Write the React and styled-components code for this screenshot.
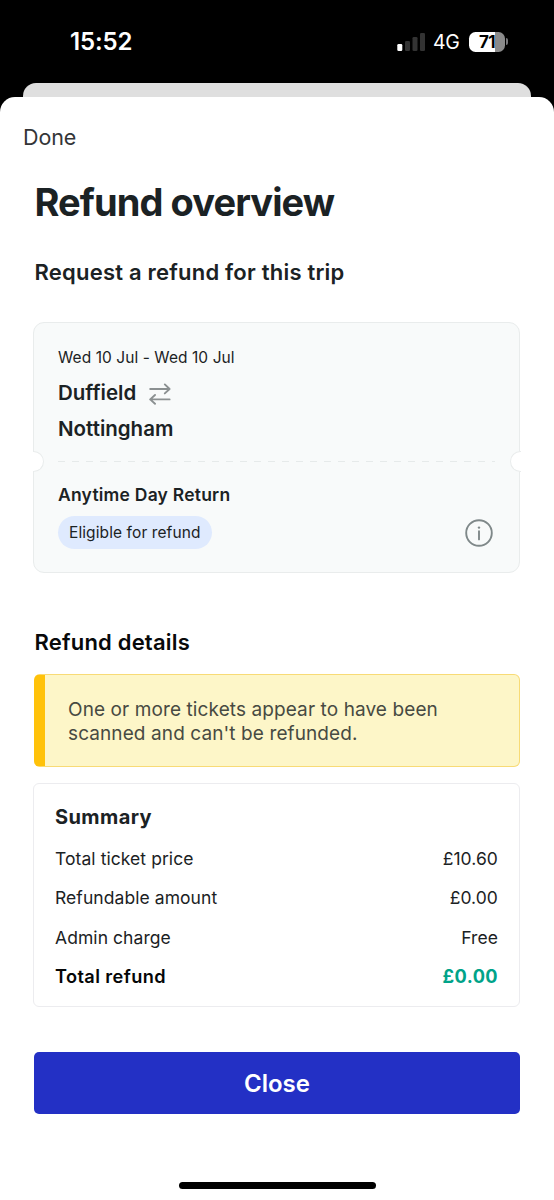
import React from 'react';
import styled, { createGlobalStyle } from 'styled-components';

const GlobalStyle = createGlobalStyle`
  * {
    box-sizing: border-box;
  }

  body {
    margin: 0;
    background: #000;
    color: #1b2224;
    font-family: Inter, 'Liberation Sans', sans-serif;
  }

  h1, h2, h3, p, dl, dt, dd {
    margin: 0;
  }
`;

const Screen = styled.div`
  width: 554px;
  height: 1200px;
  display: flex;
  flex-direction: column;
  overflow: hidden;
  background: #000;
`;

const StatusBar = styled.div`
  height: 83px;
  padding: 0 46px 0 70px;
  display: flex;
  justify-content: space-between;
  color: #fff;
  line-height: 83px;
`;

const Time = styled.span`
  font-size: 24px;
  font-weight: 600;
  letter-spacing: -0.1px;
`;

const StatusIcons = styled.div`
  display: flex;
  align-items: center;
  height: 83px;
`;

const Network = styled.span`
  margin: 0 8px 0 8px;
  padding-top: 1px;
  width: 28px;
  font-size: 19.5px;
  white-space: nowrap;
  letter-spacing: -0.3px;
`;

const Battery = styled.div`
  width: 36px;
  height: 20px;
  border-radius: 6.5px;
  background: linear-gradient(to right, #fff 71%, #8a8a8a 71%);
  color: #000;
  font-size: 17px;
  font-weight: 700;
  line-height: 20px;
  text-align: center;
  letter-spacing: -0.6px;
`;

const BatteryCap = styled.div`
  width: 2px;
  height: 7px;
  margin-left: 1px;
  border-radius: 0 2px 2px 0;
  background: #77777a;
`;

const BackSheet = styled.div`
  flex: none;
  height: 14px;
  margin: 0 23px;
  border-radius: 13px 13px 0 0;
  background: #dfdfdf;
`;

const Sheet = styled.main`
  flex: 1;
  display: flex;
  flex-direction: column;
  border-radius: 15px 15px 0 0;
  background: #fff;
`;

const DoneButton = styled.button`
  align-self: flex-start;
  height: 40px;
  margin: 20px 0 1px 23px;
  padding: 0;
  border: none;
  background: none;
  color: #333537;
  font: 400 21.5px/40px Inter, sans-serif;
  letter-spacing: -0.1px;
  cursor: pointer;
`;

const Content = styled.div`
  flex: 1;
  display: flex;
  flex-direction: column;
  padding: 20px 34px 0 33px;
`;

const Title = styled.h1`
  height: 48px;
  padding-left: 1.5px;
  font-size: 38px;
  font-weight: 700;
  line-height: 48px;
  letter-spacing: -0.92px;
`;

const Subtitle = styled.h2`
  height: 30px;
  margin-top: 31px;
  padding-left: 1.5px;
  font-size: 22px;
  font-weight: 600;
  line-height: 30px;
  letter-spacing: 0.22px;
`;

const Ticket = styled.section`
  flex: none;
  height: 251px;
  margin-top: 35px;
  border: 1.5px solid #e9ecec;
  border-radius: 11px;
  background: #f8fafa;
`;

const Journey = styled.div`
  height: 128px;
  padding: 20px 24px 0;
`;

const Dates = styled.p`
  height: 29px;
  font-size: 15.5px;
  line-height: 29px;
  letter-spacing: 0.07px;
`;

const Station = styled.div`
  display: flex;
  align-items: center;
  gap: 12.5px;
  height: 36.5px;
  padding-top: 4px;
  font-size: 20.5px;
  font-weight: 600;

  svg {
    margin-top: 3px;
  }
`;

const Perforation = styled.div`
  display: flex;
  align-items: center;
  justify-content: space-between;
  height: 21px;
  margin: 0 -1.5px;
`;

const Notch = styled.span`
  width: 11px;
  height: 21px;
  border: 1.5px solid #e9ecec;
  background: #fff;
  ${({ $side }) =>
    $side === 'left'
      ? 'border-left: none; border-radius: 0 10.5px 10.5px 0;'
      : 'border-right: none; border-radius: 10.5px 0 0 10.5px;'}
`;

const Dashes = styled.span`
  flex: 1;
  height: 1px;
  margin: 0 15px 0 14px;
  background: repeating-linear-gradient(to right, #e6eaea 0 7px, transparent 7px 14px);
`;

const Fare = styled.div`
  padding: 9px 26px 0 24px;
`;

const FareName = styled.h3`
  height: 28px;
  font-size: 17.5px;
  font-weight: 600;
  line-height: 28px;
  letter-spacing: 0.22px;
`;

const FareStatus = styled.div`
  display: flex;
  align-items: center;
  justify-content: space-between;
  margin-top: 7px;
`;

const Pill = styled.span`
  height: 33px;
  padding: 0 11px;
  border-radius: 17px;
  background: #dfeafe;
  font-size: 15.5px;
  line-height: 33px;
  letter-spacing: 0.1px;
`;

const SectionTitle = styled.h2`
  height: 30px;
  margin-top: 54px;
  padding-left: 1.5px;
  color: #08090a;
  font-size: 22px;
  font-weight: 600;
  line-height: 30px;
  letter-spacing: 0.2px;
`;

const Alert = styled.div`
  flex: none;
  display: flex;
  height: 93px;
  margin: 17px 0 0 1px;
  overflow: hidden;
  border: 1.5px solid #f8db76;
  border-left: 11px solid #ffc20a;
  border-radius: 6px;
  background: #fdf6c8;
`;

const AlertText = styled.p`
  padding: 23px 0 0 23px;
  color: #474a42;
  font-size: 19px;
  line-height: 24.2px;
  letter-spacing: 0.1px;
`;

const Summary = styled.section`
  flex: none;
  height: 224px;
  margin-top: 16px;
  padding: 13px 21px 0;
  border: 1.5px solid #ececef;
  border-radius: 6px;
`;

const SummaryTitle = styled.h3`
  height: 41.5px;
  font-size: 20px;
  font-weight: 700;
  line-height: 41px;
  letter-spacing: 0.4px;
`;

const Row = styled.dl`
  display: flex;
  justify-content: space-between;
  height: 39.5px;
  color: ${({ $total }) => ($total ? '#050607' : '#1b2224')};
  font-size: ${({ $total }) => ($total ? '18.2px' : '17.5px')};
  font-weight: ${({ $total }) => ($total ? 600 : 400)};
  line-height: 39.5px;
  letter-spacing: ${({ $total }) => ($total ? '0.4px' : '0.07px')};
`;

const Amount = styled.dd`
  color: ${({ $highlight }) => ($highlight ? '#00a389' : 'inherit')};
  font-weight: ${({ $highlight }) => ($highlight ? 700 : 'inherit')};
`;

const CloseButton = styled.button`
  flex: none;
  height: 62px;
  margin: 44.5px 0 0 1px;
  border: none;
  border-radius: 5px;
  background: #2330c5;
  color: #fff;
  font: 600 24px/62px Inter, sans-serif;
  cursor: pointer;
`;

const HomeIndicator = styled.div`
  width: 197px;
  height: 7px;
  margin: auto 0 11.5px 146px;
  border-radius: 4px;
  background: #000;
`;

const SignalIcon = () => (
  <svg width="28" height="20" viewBox="0 0 28 20">
    <rect x="0.3" y="12" width="5" height="7" rx="1.3" fill="#fff" />
    <rect x="8" y="9" width="5" height="10" rx="1.3" fill="#333" />
    <rect x="15.5" y="5" width="5" height="14" rx="1.3" fill="#333" />
    <rect x="23" y="1" width="5" height="18" rx="1.3" fill="#333" />
  </svg>
);

const ReturnIcon = () => (
  <svg
    width="22"
    height="22"
    viewBox="0 0 22 22"
    fill="none"
    stroke="#8b9091"
    strokeWidth="1.9"
    strokeLinecap="round"
    strokeLinejoin="round"
  >
    <path d="M1.2 6H20.6M15.8 1.4L20.6 6L15.8 10.4" />
    <path d="M20.6 16.4H1.2M6 12L1.2 16.4L6 20.8" />
  </svg>
);

const InfoIcon = () => (
  <svg width="28" height="28" viewBox="0 0 28 28" fill="none" stroke="#7f8889">
    <circle cx="14" cy="14" r="12.8" strokeWidth="1.9" />
    <path d="M14 12.3V20.4" strokeWidth="1.9" strokeLinecap="round" />
    <circle cx="14" cy="8.6" r="1.2" fill="#7f8889" stroke="none" />
  </svg>
);

const rows = [
  { label: 'Total ticket price', amount: '£10.60' },
  { label: 'Refundable amount', amount: '£0.00' },
  { label: 'Admin charge', amount: 'Free' },
  { label: 'Total refund', amount: '£0.00', total: true },
];

function App() {
  return (
    <>
      <GlobalStyle />
      <Screen>
        <StatusBar>
          <Time>15:52</Time>
          <StatusIcons>
            <SignalIcon />
            <Network>4G</Network>
            <Battery>71</Battery>
            <BatteryCap />
          </StatusIcons>
        </StatusBar>
        <BackSheet />
        <Sheet>
          <DoneButton>Done</DoneButton>
          <Content>
            <Title>Refund overview</Title>
            <Subtitle>Request a refund for this trip</Subtitle>

            <Ticket>
              <Journey>
                <Dates>Wed 10 Jul - Wed 10 Jul</Dates>
                <Station>
                  Duffield
                  <ReturnIcon />
                </Station>
                <Station>Nottingham</Station>
              </Journey>
              <Perforation>
                <Notch $side="left" />
                <Dashes />
                <Notch $side="right" />
              </Perforation>
              <Fare>
                <FareName>Anytime Day Return</FareName>
                <FareStatus>
                  <Pill>Eligible for refund</Pill>
                  <InfoIcon />
                </FareStatus>
              </Fare>
            </Ticket>

            <SectionTitle>Refund details</SectionTitle>
            <Alert>
              <AlertText>
                One or more tickets appear to have been
                <br />
                scanned and can't be refunded.
              </AlertText>
            </Alert>

            <Summary>
              <SummaryTitle>Summary</SummaryTitle>
              {rows.map(({ label, amount, total }) => (
                <Row key={label} $total={total}>
                  <dt>{label}</dt>
                  <Amount $highlight={total}>{amount}</Amount>
                </Row>
              ))}
            </Summary>

            <CloseButton>Close</CloseButton>
            <HomeIndicator />
          </Content>
        </Sheet>
      </Screen>
    </>
  );
}

export default App;
